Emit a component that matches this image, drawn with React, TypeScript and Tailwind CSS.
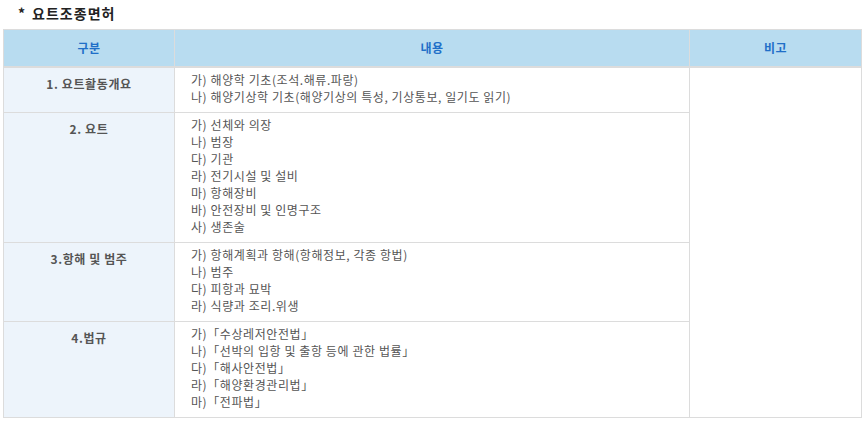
import React from "react";

const rows: { title: string; items: string[] }[] = [
  {
    title: "1. 요트활동개요",
    items: [
      "가) 해양학 기초(조석.해류.파랑)",
      "나) 해양기상학 기초(해양기상의 특성, 기상통보, 일기도 읽기)",
    ],
  },
  {
    title: "2. 요트",
    items: [
      "가) 선체와 의장",
      "나) 범장",
      "다) 기관",
      "라) 전기시설 및 설비",
      "마) 항해장비",
      "바) 안전장비 및 인명구조",
      "사) 생존술",
    ],
  },
  {
    title: "3.항해 및 범주",
    items: [
      "가) 항해계획과 항해(항해정보, 각종 항법)",
      "나) 범주",
      "다) 피항과 묘박",
      "라) 식량과 조리.위생",
    ],
  },
  {
    title: "4.법규",
    items: [
      "가)「수상레저안전법」",
      "나)「선박의 입항 및 출항 등에 관한 법률」",
      "다)「해사안전법」",
      "라)「해양환경관리법」",
      "마)「전파법」",
    ],
  },
];

export default function App() {
  return (
    <div
      className="w-[863px] h-[436px] bg-white"
      style={{ fontFamily: '"Noto Sans CJK KR", "Noto Sans", sans-serif' }}
    >
      <div className="h-[29px] pt-[3px] pl-[18px] text-[14px] leading-[20px] font-bold text-[#222] tracking-[1px]">
        <span>*</span>
        <span className="ml-[6px]">요트조종면허</span>
      </div>
      <table className="ml-[3px] w-[858px] table-fixed border-collapse">
        <colgroup>
          <col className="w-[171px]" />
          <col className="w-[515px]" />
          <col className="w-[172px]" />
        </colgroup>
        <thead>
          <tr className="h-[37px]">
            <th className="border border-[#dcdcdc] border-b-2 bg-[#b8dcf0] text-[12px] font-bold text-[#1f6fc8] tracking-[0.5px]">
              구분
            </th>
            <th className="border border-[#dcdcdc] border-b-2 bg-[#b8dcf0] text-[12px] font-bold text-[#1f6fc8] tracking-[0.5px]">
              내용
            </th>
            <th className="border border-[#dcdcdc] border-b-2 bg-[#b8dcf0] text-[12px] font-bold text-[#1f6fc8] tracking-[0.5px]">
              비고
            </th>
          </tr>
        </thead>
        <tbody>
          {rows.map((r, i) => (
            <tr key={i}>
              <td className="border border-[#dcdcdc] bg-[#edf4fb] align-top pt-[7px] text-center text-[12px] leading-[17px] font-bold text-[#555] tracking-[0.6px]">
                {r.title}
              </td>
              <td className="border border-[#dcdcdc] align-top pt-[3px] pb-[7px] pl-[16px] text-[12px] leading-[17px] text-[#555] tracking-[0.58px]">
                {r.items.map((it, j) => (
                  <div key={j}>{it}</div>
                ))}
              </td>
              {i === 0 && (
                <td rowSpan={4} className="border border-[#dcdcdc] bg-white"></td>
              )}
            </tr>
          ))}
        </tbody>
      </table>
    </div>
  );
}
